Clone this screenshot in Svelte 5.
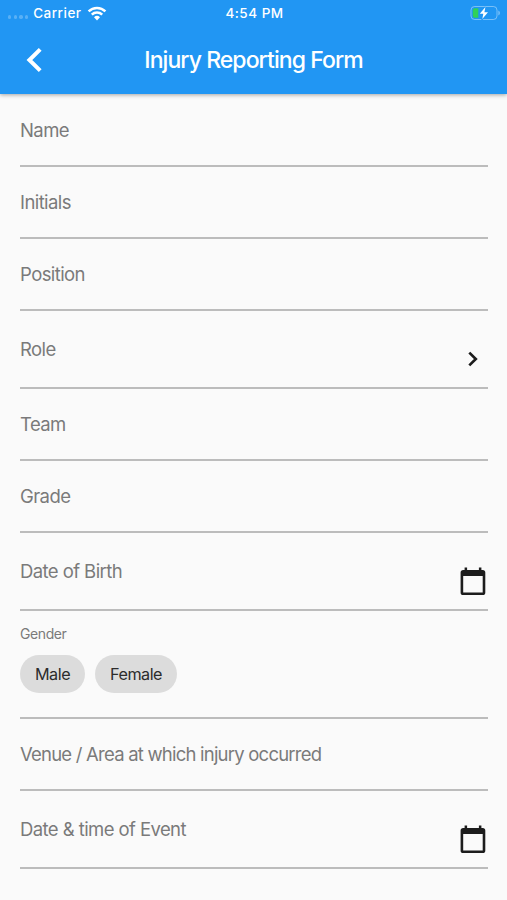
<script>
    let gender = $state(null);

    const genders = ['Male', 'Female'];

    const fields = [
        { label: 'Name', type: 'text' },
        { label: 'Initials', type: 'text' },
        { label: 'Position', type: 'text' },
        { label: 'Role', type: 'select' },
        { label: 'Team', type: 'text' },
        { label: 'Grade', type: 'text' },
        { label: 'Date of Birth', type: 'date' },
        { label: 'Gender', type: 'chips' },
        { label: 'Venue / Area at which injury occurred', type: 'text' },
        { label: 'Date & time of Event', type: 'date' }
    ];
</script>

<header class="app-bar">
    <div class="status">
        <div class="carrier">
            <span class="dots"><i></i><i></i><i></i><i></i></span>
            <span>Carrier</span>
            <svg class="wifi" width="20" height="15" viewBox="0 0 20 15">
                <path d="M1.6 5.4 A12 12 0 0 1 18.4 5.4" />
                <path d="M4.8 8.7 A7.4 7.4 0 0 1 15.2 8.7" />
                <path class="wedge" d="M10 14.4 L7 11.3 A4.3 4.3 0 0 1 13 11.3 Z" />
            </svg>
        </div>
        <span class="time">4:54 PM</span>
        <svg class="battery" width="31" height="16" viewBox="0 0 31 16">
            <rect class="shell" x="1" y="1.5" width="26" height="13" rx="3.6" />
            <path class="cap" d="M28.3 5.6 Q30 6.4 30 8 Q30 9.6 28.3 10.4 Z" />
            <path class="charge" d="M4.5 3.2 H8.3 V12.8 H4.5 Q2.8 12.8 2.8 11 V5 Q2.8 3.2 4.5 3.2 Z" />
            <path class="bolt" d="M15.4 2 L9.8 8.8 H13.3 L12.3 14 L18 7.2 H14.4 Z" />
        </svg>
    </div>
    <div class="toolbar">
        <button class="back" aria-label="Back">
            <svg width="18" height="26" viewBox="0 0 18 26">
                <path d="M15.2 2.4 L4.4 13 L15.2 23.6" />
            </svg>
        </button>
        <h1>Injury Reporting Form</h1>
        <span></span>
    </div>
</header>

<main class="form">
    {#each fields as field}
        <div class="field {field.type}">
            <span class="label" class:long={field.label.length > 30}>{field.label}</span>
            {#if field.type === 'select'}
                <svg class="icon" width="30" height="30" viewBox="0 0 30 30">
                    <path class="chevron" d="M11.3 8.6 L17.8 15 L11.3 21.4" />
                </svg>
            {:else if field.type === 'date'}
                <svg class="icon" width="30" height="30" viewBox="0 0 30 30">
                    <path d="M24.7 3.9 H23.4 V1.4 H20.9 V3.9 H9.1 V1.4 H6.6 V3.9 H5.2 A2.6 2.6 0 0 0 2.6 6.5 V26.4 A2.6 2.6 0 0 0 5.2 29 H24.7 A2.6 2.6 0 0 0 27.3 26.4 V6.5 A2.6 2.6 0 0 0 24.7 3.9 Z M24.7 26.6 H5.2 V10 H24.7 Z" />
                </svg>
            {:else if field.type === 'chips'}
                <div class="options">
                    {#each genders as option}
                        <button class="chip" class:selected={gender === option} onclick={() => (gender = option)}>{option}</button>
                    {/each}
                </div>
            {/if}
        </div>
    {/each}
</main>

<style>
    :global(body) {
        margin: 0;
        background-color: #fafafa;
        font-family: Inter, 'Liberation Sans', sans-serif;
    }

    button {
        border: none;
        padding: 0;
        font-family: inherit;
        cursor: pointer;
    }

    svg {
        display: block;
    }

    .app-bar {
        height: 94px;
        background-color: #2196f3;
        color: #fff;
        box-shadow: 0 1px 4px rgba(0, 0, 0, 0.35);
    }

    .status {
        display: grid;
        grid-template-columns: 1fr auto 1fr;
        align-items: center;
        height: 26px;
        padding: 0 6px 0 8px;
        font-size: 13.5px;
        font-weight: 500;
        letter-spacing: 0.5px;
    }

    .carrier {
        display: flex;
        align-items: center;
    }

    .dots {
        display: flex;
        gap: 2.2px;
        margin: 8px 5px 0 0;
    }

    .dots i {
        width: 3.4px;
        height: 3.4px;
        border-radius: 50%;
        background-color: rgba(255, 255, 255, 0.25);
    }

    .wifi {
        margin-left: 5px;
        fill: none;
        stroke: #fff;
        stroke-width: 2.5;
    }

    .wifi .wedge {
        fill: #fff;
        stroke: none;
    }

    .battery {
        justify-self: end;
    }

    .shell {
        fill: none;
        stroke: rgba(255, 255, 255, 0.4);
    }

    .cap {
        fill: rgba(255, 255, 255, 0.4);
    }

    .charge {
        fill: #30d158;
    }

    .bolt {
        fill: #fff;
        stroke: #2196f3;
        stroke-width: 1.6;
        paint-order: stroke;
    }

    .toolbar {
        display: grid;
        grid-template-columns: 1fr auto 1fr;
        align-items: center;
        height: 68px;
        padding: 0 25px;
    }

    .back {
        justify-self: start;
        background: none;
    }

    .back path {
        fill: none;
        stroke: #fff;
        stroke-width: 4;
    }

    h1 {
        margin: 0;
        font-size: 23px;
        font-weight: 500;
        letter-spacing: -0.93px;
    }

    .form {
        padding: 1px 19px 0 20px;
    }

    .field {
        display: flex;
        align-items: flex-start;
        justify-content: space-between;
        box-sizing: border-box;
        height: 72px;
        padding-top: 23px;
        border-bottom: 2px solid #bcbcbc;
    }

    .label {
        color: #7a7a7a;
        font-size: 18.5px;
        line-height: 24px;
        letter-spacing: -0.58px;
    }

    .label.long {
        letter-spacing: -0.78px;
    }

    .select,
    .date {
        height: 78px;
        padding-top: 26px;
    }

    .icon {
        margin-top: 7px;
        fill: #1c1c1c;
    }

    .chevron {
        fill: none;
        stroke: #1c1c1c;
        stroke-width: 2.7;
    }

    .chips {
        flex-direction: column;
        justify-content: flex-start;
        height: 108px;
        padding-top: 14px;
    }

    .chips .label {
        font-size: 14px;
        line-height: 18px;
        letter-spacing: -0.4px;
    }

    .options {
        display: flex;
        gap: 10px;
        margin-top: 12px;
    }

    .chip {
        height: 38px;
        padding: 0 15px;
        border-radius: 19px;
        background-color: #dcdcdc;
        color: #2c2c2c;
        font-size: 16.2px;
        letter-spacing: -0.5px;
    }

    .chip.selected {
        background-color: #bbdefb;
    }
</style>
